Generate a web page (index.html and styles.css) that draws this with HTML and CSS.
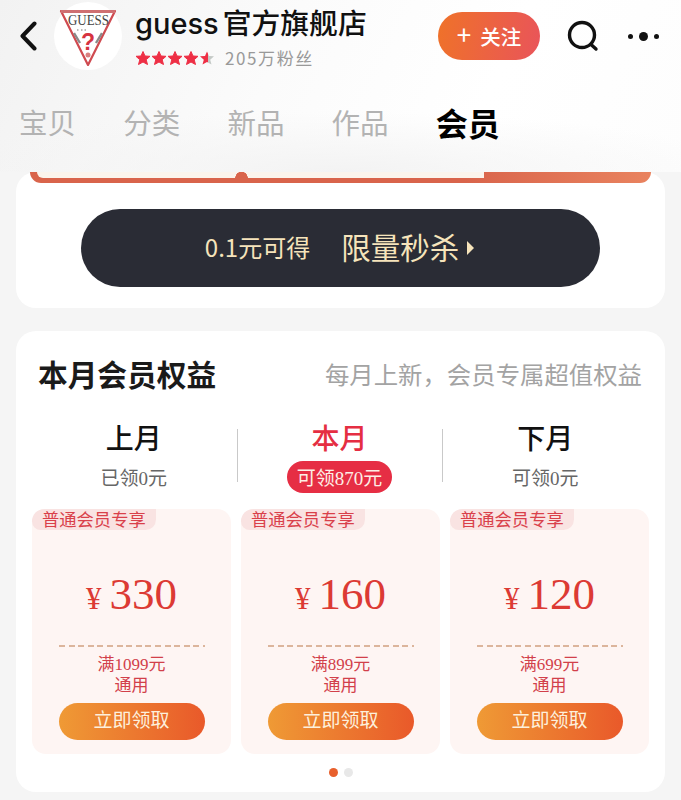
FILE: index.html

```html
<!DOCTYPE html>
<html lang="zh-CN">
<head>
    <meta charset="UTF-8">
    <meta name="viewport" content="width=device-width, initial-scale=1.0">
    <title>guess官方旗舰店</title>
    <link rel="stylesheet" href="styles.css">
</head>
<body>
    <header class="shop-header">
        <div class="shop-bar">
            <svg class="back-icon" width="18" height="30" viewBox="0 0 18 30"><path d="M15.500 2.500 L3.500 15 L15.500 27.500" fill="none" stroke="#111" stroke-width="4" stroke-linecap="round" stroke-linejoin="round"/></svg>
            <div class="shop-logo">
                <svg width="60" height="60" viewBox="0 0 60 60">
                    <path d="M3 5 H57 L30 59 Z" fill="#fff" stroke="#cf4a50" stroke-width="2.200" stroke-linejoin="round"/>
                    <rect x="3" y="4" width="54" height="3" fill="#cf6f72"/>
                    <text x="30.500" y="19" text-anchor="middle" textLength="41" lengthAdjust="spacingAndGlyphs" class="logo-word">GUESS</text>
                    <path d="M19 24 h1.500 M23 24 h1.500 M26.500 24 h1.500" stroke="#777" stroke-width="1"/>
                    <path d="M16 27 L22 37 M44 27 L38 37" stroke="#8a8a8a" stroke-width="2.400"/>
                    <text x="30" y="44" text-anchor="middle" class="logo-mark">?</text>
                    <circle cx="30" cy="49" r="2.500" fill="#d98080"/>
                </svg>
            </div>
            <div class="shop-info">
                <div class="shop-name"><span class="shop-latin">guess</span>官方旗舰店</div>
                <div class="shop-meta">
                    <span class="stars">
                        <svg width="80" height="16" viewBox="0 0 80 16">
                            <defs>
                                <linearGradient id="starHalf"><stop offset="55%" stop-color="#ee2f45"/><stop offset="55%" stop-color="#c4c9c6"/></linearGradient>
                                <polygon id="star" points="8,1.500 10,6 15,6.300 11.200,9.700 12.500,14.500 8,12 3.500,14.500 4.800,9.700 1,6.300 6,6"/>
                            </defs>
                            <g stroke-width="1" stroke-linejoin="round">
                                <use href="#star" fill="#ee2f45" stroke="#ee2f45"/>
                                <use href="#star" x="16" fill="#ee2f45" stroke="#ee2f45"/>
                                <use href="#star" x="32" fill="#ee2f45" stroke="#ee2f45"/>
                                <use href="#star" x="48" fill="#ee2f45" stroke="#ee2f45"/>
                                <use href="#star" x="64" fill="url(#starHalf)"/>
                            </g>
                        </svg>
                    </span>
                    <span class="fans">205万粉丝</span>
                </div>
            </div>
            <button class="follow-btn"><span class="follow-plus">+</span>关注</button>
            <svg class="search-icon" width="32" height="32" viewBox="0 0 32 32"><circle cx="15" cy="15" r="12.500" fill="none" stroke="#111" stroke-width="3.400"/><path d="M24 24.500 L29 29" stroke="#111" stroke-width="3.400" stroke-linecap="round"/></svg>
            <div class="more-dots"><i></i><i class="big"></i><i></i></div>
        </div>
        <nav class="shop-nav">
            <a>宝贝</a>
            <a>分类</a>
            <a>新品</a>
            <a>作品</a>
            <a class="active">会员</a>
        </nav>
    </header>

    <section class="card card-top">
        <div class="strip">
            <span class="strip-a"></span>
            <span class="strip-notch"></span>
            <span class="strip-b"></span>
        </div>
        <div class="flash-btn">
            <span class="flash-small">0.1元可得</span>
            <span class="flash-big">限量秒杀</span>
            <span class="flash-arrow"></span>
        </div>
    </section>

    <section class="card card-rights">
        <div class="rights-head">
            <h2>本月会员权益</h2>
            <span>每月上新，会员专属超值权益</span>
        </div>
        <div class="months">
            <div class="month">
                <div class="month-name">上月</div>
                <div class="month-sub">已领<b>0</b>元</div>
            </div>
            <div class="month current">
                <div class="month-name">本月</div>
                <div class="month-sub">可领<b>870</b>元</div>
            </div>
            <div class="month">
                <div class="month-name">下月</div>
                <div class="month-sub">可领<b>0</b>元</div>
            </div>
        </div>
        <div class="coupons">
            <div class="coupon">
                <div class="coupon-tag">普通会员专享</div>
                <div class="coupon-price"><span class="yen">¥</span>330</div>
                <div class="coupon-rule">满<b>1099</b>元<br>通用</div>
                <div class="coupon-btn">立即领取</div>
            </div>
            <div class="coupon">
                <div class="coupon-tag">普通会员专享</div>
                <div class="coupon-price"><span class="yen">¥</span>160</div>
                <div class="coupon-rule">满<b>899</b>元<br>通用</div>
                <div class="coupon-btn">立即领取</div>
            </div>
            <div class="coupon">
                <div class="coupon-tag">普通会员专享</div>
                <div class="coupon-price"><span class="yen">¥</span>120</div>
                <div class="coupon-rule">满<b>699</b>元<br>通用</div>
                <div class="coupon-btn">立即领取</div>
            </div>
        </div>
        <div class="dots"><i class="on"></i><i></i></div>
    </section>
</body>
</html>
```

FILE: styles.css

```css
* {
    box-sizing: border-box;
}
body {
    margin: 0;
    height: 800px;
    overflow: hidden;
    background-color: #f5f5f5;
    font-family: "Noto Sans CJK SC", "Noto Sans", sans-serif;
    color: #111;
}
.shop-header {
    height: 172px;
    background:
        radial-gradient(ellipse 60% 35% at 50% 100%, #f3f3f3, rgba(243, 243, 243, 0)),
        linear-gradient(115deg, #f2f2f2 0%, #fbfbfb 40%, #ffffff 70%, #fdfdfd 100%);
}
.shop-bar {
    display: flex;
    align-items: center;
    height: 72px;
    padding-left: 19px;
}
.back-icon {
    flex: none;
}
.shop-logo {
    display: flex;
    align-items: center;
    justify-content: center;
    flex: none;
    width: 68px;
    height: 68px;
    margin-left: 17px;
    border-radius: 50%;
    background-color: #fff;
}
.logo-word {
    font-family: "Liberation Serif", serif;
    font-size: 14px;
    fill: #444;
}
.logo-mark {
    font-family: "Liberation Sans", sans-serif;
    font-size: 23px;
    font-weight: bold;
    fill: #d6333f;
}
.shop-info {
    width: 303px;
    margin-left: 13px;
    margin-top: 6px;
}
.shop-name {
    margin-top: -6px;
    font-size: 28.800px;
    font-weight: 500;
    line-height: 38px;
    white-space: nowrap;
}
.shop-latin {
    font-family: "Inter", sans-serif;
    font-size: 29px;
    margin-right: 4px;
}
.shop-meta {
    display: flex;
    align-items: center;
    height: 24px;
    margin-top: 3px;
}
.stars {
    display: flex;
    width: 90px;
}
.fans {
    font-size: 17px;
    letter-spacing: 1.6px;
    color: #999;
}
.follow-btn {
    flex: none;
    width: 102px;
    height: 48px;
    padding: 0;
    border: none;
    border-radius: 24px;
    background: linear-gradient(100deg, #ef7229, #e9545a);
    color: #fff;
    font-family: inherit;
    font-size: 20.500px;
    font-weight: 500;
}
.follow-plus {
    margin-right: 9px;
    font-size: 26px;
    font-weight: 400;
    line-height: 1;
}
.search-icon {
    flex: none;
    margin-left: 27px;
}
.more-dots {
    display: flex;
    align-items: center;
    gap: 6px;
    margin-left: 29px;
}
.more-dots i {
    width: 5px;
    height: 5px;
    border-radius: 50%;
    background-color: #111;
}
.more-dots i.big {
    width: 9px;
    height: 9px;
}
.shop-nav {
    display: flex;
    align-items: center;
    gap: 47.200px;
    height: 100px;
    padding: 0 0 0 19px;
    font-size: 28.500px;
    color: #b3b3b3;
}
.shop-nav a {
    margin-top: -1px;
}
.shop-nav a.active {
    font-size: 32px;
    font-weight: 700;
    color: #000;
}
.card {
    margin: 0 16px;
    border-radius: 20px;
    background-color: #fff;
}
.card-top {
    height: 136px;
    padding: 0 14px;
}
.strip {
    display: flex;
    align-items: flex-start;
    height: 11px;
    padding-left: 7px;
    border-radius: 0 0 12px 12px;
    background: linear-gradient(90deg, #d9644b 0%, #d9644b 70%, #e9835f 100%);
}
.strip span {
    height: 6px;
    background-color: #fbf4ec;
}
.strip-a {
    width: 198px;
    border-bottom-left-radius: 8px;
}
.strip span.strip-notch {
    width: 13px;
    background: radial-gradient(circle at 50% 100%, #d9644b 6px, #fbf4ec 6.500px);
}
.strip-b {
    width: 236px;
}
.flash-btn {
    display: flex;
    align-items: center;
    justify-content: center;
    width: 519px;
    height: 78px;
    margin: 26px 0 0 51px;
    padding: 0 2px 4px 0;
    border-radius: 39px;
    background-color: #2a2c35;
    color: #f6e4bb;
}
.flash-small {
    font-size: 24px;
    font-weight: 400;
}
.flash-big {
    margin-left: 31px;
    font-size: 29.500px;
    font-weight: 400;
}
.flash-arrow {
    width: 0;
    height: 0;
    margin: 4px 0 0 8px;
    border-top: 7px solid transparent;
    border-bottom: 7px solid transparent;
    border-left: 7px solid #f6e4bb;
}
.card-rights {
    height: 461px;
    margin-top: 23px;
    padding: 0 16px;
}
.rights-head {
    display: flex;
    align-items: center;
    justify-content: space-between;
    height: 84px;
    padding: 0 7px 0 6px;
}
.rights-head h2 {
    margin: 0;
    font-size: 29.700px;
    font-weight: 700;
    color: #1a1a1a;
}
.rights-head span {
    font-size: 24.400px;
    color: #a3a3a3;
}
.months {
    display: flex;
    height: 94px;
    margin: 0 1px 0 -1px;
    padding-top: 14px;
}
.month {
    flex: 1;
    position: relative;
    text-align: center;
}
.month + .month::before {
    content: "";
    position: absolute;
    left: 0;
    top: 0;
    width: 1px;
    height: 53px;
    background-color: #c9c9c9;
}
.month-name {
    margin-top: -15px;
    font-size: 28px;
    font-weight: 500;
    line-height: 47px;
}
.month-sub {
    font-size: 19px;
    line-height: 32px;
    color: #666;
}
.month-sub b {
    font-family: "Liberation Serif", serif;
    font-weight: 400;
    line-height: 1;
}
.month.current .month-name {
    color: #e52e42;
}
.month.current .month-sub {
    display: inline-block;
    padding: 0 10px;
    border-radius: 16px;
    background-color: #e62e44;
    color: #fdeee6;
}
.coupons {
    display: flex;
    gap: 10px;
}
.coupon {
    display: flex;
    flex-direction: column;
    align-items: center;
    width: 199px;
    height: 245px;
    border-radius: 14px;
    background-color: #fef5f3;
}
.coupon-tag {
    align-self: flex-start;
    height: 21px;
    padding: 0 10px 0 10px;
    border-radius: 14px 0 12px 10px;
    background-color: #f9e3e2;
    font-size: 17.300px;
    line-height: 20px;
    color: #d9404a;
}
.coupon-price {
    display: flex;
    align-items: baseline;
    justify-content: center;
    gap: 8px;
    width: 146px;
    height: 117px;
    padding-top: 36px;
    background-image: repeating-linear-gradient(90deg, #dcb59c 0, #dcb59c 6px, transparent 6px, transparent 9.600px);
    background-size: 100% 2px;
    background-position: bottom;
    background-repeat: no-repeat;
    font-family: "Liberation Serif", serif;
    font-size: 45px;
    line-height: 56px;
    color: #dc3a34;
}
.yen {
    font-size: 31px;
}
.coupon-rule {
    margin-top: 5px;
    font-size: 17px;
    line-height: 21px;
    text-align: center;
    color: #d2404a;
}
.coupon-rule b {
    font-family: "Liberation Serif", serif;
    font-weight: 400;
    line-height: 1;
}
.coupon-btn {
    width: 146px;
    height: 37px;
    margin-top: 9px;
    border-radius: 19px;
    background: linear-gradient(90deg, #ef9a35, #e9592a);
    font-size: 19px;
    line-height: 32px;
    text-align: center;
    color: #fdf0dc;
}
.dots {
    display: flex;
    justify-content: center;
    gap: 6px;
    margin-top: 14px;
}
.dots i {
    width: 9px;
    height: 9px;
    border-radius: 50%;
    background-color: #e8e8e8;
}
.dots i.on {
    background-color: #e8602c;
}
```
